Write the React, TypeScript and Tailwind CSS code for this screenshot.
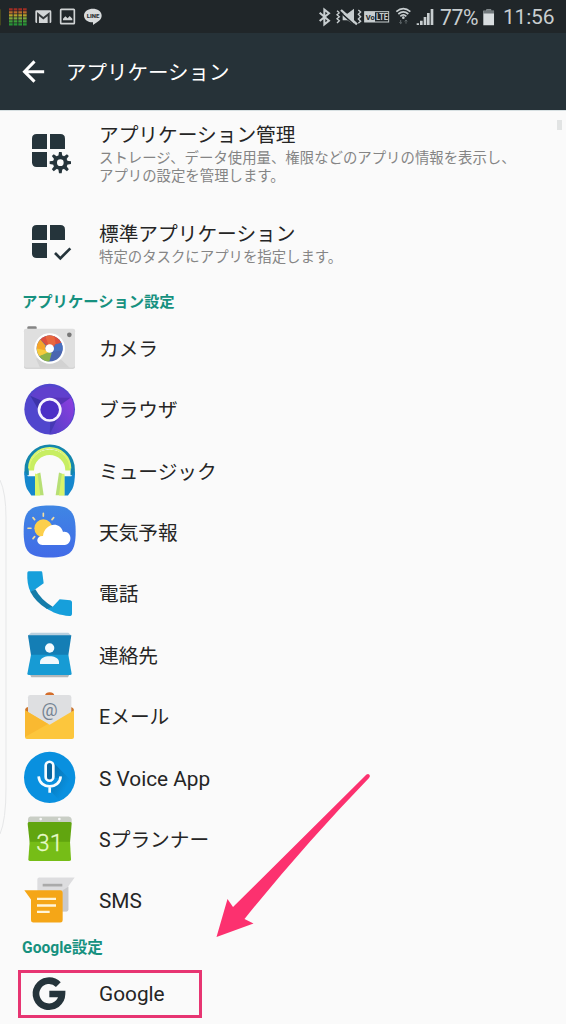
import React from "react";

type IconProps = { box: string; children: React.ReactNode };

function AppIcon({ box, children }: IconProps) {
  return (
    <svg viewBox={box} className="h-14 w-14 shrink-0">
      {children}
    </svg>
  );
}

const ink = "#25343b";

function ManageIcon() {
  const teeth = [0, 45, 90, 135, 180, 225, 270, 315];
  return (
    <AppIcon box="66 45 168 168">
      <g fill={ink}>
        <path d="M110 72H141V117H96V86Q96 72 110 72Z" />
        <path d="M150 72H181Q195 72 195 86V117H150Z" />
        <path d="M96 126H141V171H110Q96 171 96 157Z" />
        {teeth.map((a) => (
          <path key={a} d="M177 126H185L187 139H175Z" transform={`rotate(${a} 181 158)`} />
        ))}
      </g>
      <circle cx="181" cy="158" r="16" fill="none" stroke={ink} strokeWidth="12" />
    </AppIcon>
  );
}

function DefaultsIcon() {
  return (
    <AppIcon box="66 312 168 168">
      <g fill={ink}>
        <path d="M110 345H141V390H96V359Q96 345 110 345Z" />
        <path d="M150 345H181Q195 345 195 359V390H150Z" />
        <path d="M96 399H141V444H110Q96 444 96 430Z" />
      </g>
      <path d="M165 429L181 445L211 415" fill="none" stroke={ink} strokeWidth="8" />
    </AppIcon>
  );
}

function CameraIcon() {
  return (
    <AppIcon box="66 15.5 168 168">
      <path d="M82 40V35Q82 31 86 31H106Q110 31 110 35V40Z" fill="#858585" />
      <rect x="72" y="40" width="153" height="119" rx="6" fill="#c9c9c9" />
      <rect x="72" y="39" width="153" height="117" rx="6" fill="#dfdfdf" />
      <path d="M180 128L209 156H120L108 128Z" fill="#d2d2d2" />
      <circle cx="208" cy="57" r="7" fill="#777" />
      <circle cx="149" cy="98" r="46" fill="#fff" />
      <circle cx="149" cy="98" r="39" fill="#4a66b0" />
      <path d="M149 98L121 71A39 39 0 0 1 184 81Z" fill="#dd4f3e" />
      <path d="M149 98L136 61A39 39 0 0 1 163 61.500L167 84Z" fill="#e8683f" />
      <path d="M165 86L184 81A39 39 0 0 1 188 104L160 108Z" fill="#4a70be" />
      <path d="M121 71L136 88L137 108L111 106A39 39 0 0 1 121 71Z" fill="#f5a42a" />
      <path d="M110 98L139 104L150 112L118 121A39 39 0 0 1 110 98Z" fill="#f5cb3d" />
      <path d="M118 121L148 108L155 112L148 137A39 39 0 0 1 118 121Z" fill="#8cb34a" />
      <circle cx="149" cy="98" r="13" fill="#fff" />
    </AppIcon>
  );
}

function BrowserIcon() {
  return (
    <AppIcon box="66 199.4 168 168">
      <defs>
        <linearGradient id="violet" x1="0" y1="1" x2="1" y2="0">
          <stop offset="0" stopColor="#5041c6" />
          <stop offset="1" stopColor="#8f3de0" />
        </linearGradient>
      </defs>
      <circle cx="149" cy="281" r="76" fill="#5046cd" />
      <path d="M91 241A76 76 0 0 1 213 244L149 246L121 266Z" fill="#6040cd" />
      <path d="M149 246H213A76 76 0 0 1 149 357L178 296Z" fill="url(#violet)" />
      <path d="M149 246H213L182 268Z" fill="#5634b8" />
      <path d="M91 241L132 311L115 279L125 256Z" fill="#3d33a9" />
      <path d="M149 357L178 296L151 316Z" fill="#4638b4" />
      <circle cx="149" cy="283" r="32" fill="#4c2fc6" stroke="#f7f4ff" strokeWidth="8" />
    </AppIcon>
  );
}

function MusicIcon() {
  return (
    <AppIcon box="66 383.2 168 168">
      <path d="M80 480V463A69 69 0 0 1 218 463V480" fill="none" stroke="#1486ac" strokeWidth="13" />
      <path d="M94 466A55 55 0 0 1 204 466" fill="none" stroke="#c8ee62" strokeWidth="16" />
      <path d="M87 460A62 62 0 0 1 211 460" fill="none" stroke="#dcf66d" strokeWidth="6" />
      <path d="M73 467L84 483H105V541H94L81 521Q73 505 73 467Z" fill="#1587cd" />
      <path d="M225 467L214 483H193V541H204L217 521Q225 505 225 467Z" fill="#1587cd" />
      <path d="M105 478L121 472L131 540H105Z" fill="#b7df75" />
      <path d="M193 478L177 472L167 540H193Z" fill="#b7df75" />
      <path d="M105 475L113 478L121 541H105Z" fill="#d8f46a" />
      <path d="M193 475L185 478L177 541H193Z" fill="#d8f46a" />
    </AppIcon>
  );
}

function WeatherIcon() {
  return (
    <AppIcon box="66 27.2 168 168">
      <defs>
        <linearGradient id="sky" x1="0" y1="0" x2="0" y2="1">
          <stop offset="0" stopColor="#3f86e4" />
          <stop offset="1" stopColor="#426be7" />
        </linearGradient>
      </defs>
      <path d="M71 107C71 47 85 29 149 29S227 47 227 107S213 185 149 185S71 167 71 107Z" fill="url(#sky)" />
      <circle cx="130" cy="97" r="27" fill="#fccf4b" />
      <path d="M130 52V61M99 65L104 71M84 97H93M99 128L104 122M161 65L156 71" stroke="#f1dda0" strokeWidth="5" strokeLinecap="round" />
      <path d="M127 147C106 145 107 119 129 120C133 82 180 74 189 108C216 103 220 145 194 147Z" fill="#fff" />
    </AppIcon>
  );
}

function PhoneIcon() {
  return (
    <AppIcon box="66 211 168 168">
      <path d="M86 227H123Q127 227 127 231L131 263L106 281L92 290Q80 266 82 232Q82 227 86 227Z" fill="#169fdb" />
      <path d="M179 311L211 314Q216 315 216 320V354Q216 361 208 361C180 359 158 351 138 337L158 333Z" fill="#169fdb" />
      <path d="M106 281Q124 314 158 333L141 340Q107 319 91 288Z" fill="#157ca9" />
    </AppIcon>
  );
}

function ContactsIcon() {
  return (
    <AppIcon box="66 395 168 168">
      <path d="M93 412H205L213 420V430H85V420Z" fill="#b9d0df" />
      <path d="M86 530H212L204 546H94Z" fill="#b2b7ba" />
      <path d="M84 420H214L205 480H93Z" fill="#147eb5" />
      <path d="M93 478H205L215 535Q215 539 210 539H87Q82 539 82 535Z" fill="#179bd4" />
      <circle cx="149" cy="458" r="14" fill="#f4fbff" />
      <path d="M120 506V500C120 477 177 477 177 500V506Z" fill="#f1f8fc" />
    </AppIcon>
  );
}

function EmailIcon() {
  return (
    <AppIcon box="66 23.9 168 168">
      <path d="M75 92Q75 82 86 81H212Q222 83 222 93V120H75Z" fill="#cd762c" />
      <path d="M135 46Q137 37 149 37T163 46Z" fill="#d46e2b" />
      <path d="M84 52Q84 45 91 45H207Q214 45 214 52V109L149 143L84 109Z" fill="#dedfe1" />
      <path d="M75 91L149 134L222 91V171Q222 177 216 177H81Q75 177 75 171Z" fill="#fcc63d" />
      <path d="M75 91L144 132L75 171Z" fill="#f9b931" />
      <text x="149" y="108" fontSize="54" textAnchor="middle" fill="#768493" className="font-['Roboto']">@</text>
    </AppIcon>
  );
}

function VoiceIcon() {
  return (
    <AppIcon box="66 207.8 168 168">
      <defs>
        <linearGradient id="shade" x1="0" y1="0" x2="1" y2="1">
          <stop offset="0" stopColor="#076da9" />
          <stop offset="0.7" stopColor="#0990df" />
        </linearGradient>
      </defs>
      <circle cx="149" cy="290" r="77" fill="#0990df" />
      <path d="M160 245L216 302Q209 338 178 359L152 331L180 292L160 291Z" fill="url(#shade)" />
      <g fill="none" stroke="#f7fcff" strokeWidth="8">
        <rect x="137" y="243" width="23" height="57" rx="11.5" fill="#08659f" />
        <path d="M116 287C118 327 180 327 182 287M149 316V336" />
      </g>
    </AppIcon>
  );
}

function PlannerIcon() {
  return (
    <AppIcon box="66 391.7 168 168">
      <path d="M91 408H206Q213 408 215 416V430H84V416Q85 408 91 408Z" fill="#c9cec5" />
      <circle cx="122" cy="416" r="4" fill="#f7f7f7" />
      <circle cx="178" cy="416" r="4" fill="#f7f7f7" />
      <path d="M87 425H211Q215 425 215 430L210 486H89L83 430Q83 425 87 425Z" fill="#61a50f" />
      <path d="M89 484H210L213 537Q213 542 207 542H91Q85 542 85 537Z" fill="#76bd17" />
      <text x="149" y="512" fontSize="72" textAnchor="middle" fill="#e7fac9" stroke="#e7fac9" strokeWidth="1" className="font-['Roboto'] font-light">31</text>
    </AppIcon>
  );
}

function MessageIcon() {
  return (
    <AppIcon box="66 35.6 168 168">
      <path d="M112 58Q112 52 118 52H224L205 78V148Q205 154 199 154H112Z" fill="#dddddf" />
      <path d="M187 91L205 80V148Q205 154 199 154H187Z" fill="#c9c9cb" />
      <rect x="128" y="71" width="59" height="8" fill="#aaa" />
      <path d="M73 90H181Q188 90 188 97V180Q188 187 181 187H100Q93 187 93 180V118Z" fill="#f5a617" />
      <path d="M111 116H168M111 136H168M111 155H149" stroke="#fff5d9" strokeWidth="7" />
    </AppIcon>
  );
}

function GoogleIcon() {
  return (
    <AppIcon box="66 318 168 168">
      <path d="M175 374A39 39 0 1 0 186 402H148" fill="none" stroke={ink} strokeWidth="20" />
    </AppIcon>
  );
}

function NotificationIcons() {
  const rows = ["#a12e24", "#b86b2a", "#b7a12b", "#7fa83c", "#3d9d38", "#279336"];
  return (
    <svg viewBox="0 0 330 99" className="h-[33px] w-[110px] shrink-0">
      <rect y="28" width="2" height="48" fill="#59571c" />
      {rows.map((color, i) => (
        <path key={color} d={`M27 ${28 + i * 9}H80`} stroke={color} strokeWidth="7" strokeDasharray="11 3" />
      ))}
      <rect x="106" y="31" width="48" height="38" rx="4" fill="#d3d6d7" />
      <path d="M114 69V42L130 55L146 42V69" fill="none" stroke="#34383a" strokeWidth="6" />
      <rect x="182" y="28" width="41" height="43" rx="2" fill="none" stroke="#d0d3d4" strokeWidth="5" />
      <path d="M189 61V56L196 49L203 55L209 48L217 56V61Z" fill="#d0d3d4" />
      <path d="M252 47C252 19 305 19 305 47C305 60 290 67 279 75V67C263 67 252 58 252 47Z" fill="#d8dbdc" />
      <text x="279" y="53" fontSize="17" textAnchor="middle" textLength="38" lengthAdjust="spacingAndGlyphs" fill="#303436" className="font-['Roboto'] font-black">LINE</text>
    </svg>
  );
}

function SystemIcons() {
  return (
    <svg viewBox="99 0 363 99" className="h-[33px] w-[121px] shrink-0" fill="none" stroke="#c8ced0">
      <path d="M113 38L141 62L127 73V29L141 40L113 63" strokeWidth="6" />
      <path d="M165 32L172 38L165 44L172 50L165 56L172 62L165 69M229 30L236 36L229 43L236 50L229 57L236 64L229 70" strokeWidth="4" />
      <path d="M182 41H196L216 26V74L196 61H182Z" fill="#c8ced0" stroke="none" />
      <path d="M174 36L222 79" stroke="#202629" strokeWidth="5" />
      <path d="M177 30L225 73" strokeWidth="7" />
      <rect x="248" y="35" width="72" height="31" strokeWidth="3" />
      <rect x="248" y="35" width="31" height="31" fill="#c8ced0" stroke="none" />
      <text x="251" y="60" fontSize="24" textLength="27" lengthAdjust="spacingAndGlyphs" fill="#202629" stroke="none" className="font-['Roboto'] font-bold">Vo</text>
      <text x="282" y="60" fontSize="25" textLength="36" lengthAdjust="spacingAndGlyphs" fill="#c8ced0" stroke="none" className="font-['Roboto'] font-bold">LTE</text>
      <path d="M343 35Q364 17 385 35M349 42Q364 29 379 42M355 49Q364 40 373 49" strokeWidth="5" />
      <circle cx="364" cy="53" r="4" fill="#c8ced0" stroke="none" />
      <path d="M356 60V71M352 67L356 71L360 67M372 71V60M368 64L372 60L376 64" stroke="#60686b" strokeWidth="3" />
      <path d="M404 70H411V75H404ZM414 62H422V75H414ZM425 51H433V75H425ZM435 39H443V75H435ZM446 27H454V75H446Z" fill="#c8ced0" stroke="none" />
    </svg>
  );
}

const apps = [
  { label: "カメラ", icon: <CameraIcon /> },
  { label: "ブラウザ", icon: <BrowserIcon /> },
  { label: "ミュージック", icon: <MusicIcon /> },
  { label: "天気予報", icon: <WeatherIcon /> },
  { label: "電話", icon: <PhoneIcon /> },
  { label: "連絡先", icon: <ContactsIcon /> },
  { label: "Eメール", icon: <EmailIcon /> },
  { label: "S Voice App", icon: <VoiceIcon />, latin: true },
  { label: "Sプランナー", icon: <PlannerIcon /> },
  { label: "SMS", icon: <MessageIcon />, latin: true },
];

export default function App() {
  return (
    <div className="relative flex h-[1024px] w-[566px] flex-col overflow-hidden bg-[#fafafa] font-['Roboto','Noto_Sans_CJK_JP',sans-serif] text-[#252525]">
      <header className="shrink-0 bg-[#263238] text-white">
        <div className="flex h-[33px] items-center justify-between bg-[#202629] text-[#c8ced0]">
          <NotificationIcons />
          <div className="flex h-[33px] items-center pr-[12px]">
            <SystemIcons />
            <span className="ml-[4px] w-[39px] whitespace-nowrap pt-px text-[21.2px] leading-[33px] tracking-[-0.4px]">77%</span>
            <svg viewBox="600 20 40 60" className="ml-[3px] h-5 w-[13px]">
              <path d="M614 26H628V31H637V75H604V31H614Z" fill="#d8dddf" />
              <path d="M614 26H628V31H637V39H604V31H614Z" fill="#71797c" />
            </svg>
            <span className="ml-[8px] w-[51px] whitespace-nowrap pt-px text-[21px] leading-[33px] tracking-[-0.2px]">11:56</span>
          </div>
        </div>
        <div className="flex h-[77px] items-center pl-[22px]">
          <svg viewBox="66 180 68 69" className="h-[23px] w-[23px]" fill="none" stroke="#fff" strokeWidth="9">
            <path d="M132 215H73M103 184L73 215L103 245" />
          </svg>
          <h1 className="mt-[2px] ml-[21px] text-[20.5px] leading-[30px]">アプリケーション</h1>
        </div>
      </header>

      <main className="flex flex-1 flex-col border-t border-[#d7e0e2]">
        <section className="flex h-[98px] shrink-0 items-start pl-[22px] pt-[14px]">
          <ManageIcon />
          <div className="-mt-[4px] ml-[21px]">
            <h2 className="text-[19.7px] leading-[29px]">アプリケーション管理</h2>
            <p className="whitespace-nowrap text-[14.4px] leading-[18px] text-[#858585]">
              ストレージ、データ使用量、権限などのアプリの情報を表示し、<br />アプリの設定を管理します。
            </p>
          </div>
        </section>
        <section className="flex h-[81px] shrink-0 items-start pl-[22px] pt-[5px]">
          <DefaultsIcon />
          <div className="mt-[6px] ml-[21px]">
            <h2 className="text-[19.7px] leading-[29px]">標準アプリケーション</h2>
            <p className="text-[14.4px] leading-[18px] text-[#858585]">特定のタスクにアプリを指定します。</p>
          </div>
        </section>
        <h3 className="h-[28px] shrink-0 pl-[22px] text-[15.3px] leading-[24px] font-bold text-[#16917f]">アプリケーション設定</h3>
        <ul className="shrink-0">
          {apps.map(({ label, icon, latin }) => (
            <li key={label} className="flex h-[61.3px] items-center pl-[22px]">
              {icon}
              <span className={latin ? "mt-[2px] ml-[21px] text-[20.8px] leading-[28px]" : "mt-[3px] ml-[21px] text-[19.7px] leading-[28px]"}>{label}</span>
            </li>
          ))}
        </ul>
        <h3 className="mt-[5px] h-[34px] shrink-0 pl-[22px] text-[15.6px] leading-[25px] font-bold text-[#16917f]">Google設定</h3>
        <div className="ml-[18px] flex h-[48px] w-[184px] shrink-0 items-center border-[3px] border-[#e73572] pl-px">
          <GoogleIcon />
          <span className="mt-px ml-[21px] text-[20.8px] leading-[28px]">Google</span>
        </div>
      </main>

      <div className="absolute top-[120px] right-[4px] h-[10px] w-[5px] bg-[#e2e4e4]" />
      <svg viewBox="0 0 8 360" className="pointer-events-none absolute top-[478px] left-0 h-[360px] w-2" fill="none" stroke="#e6e7e8">
        <path d="M0 2Q6 15 6 40V310Q6 342 0 356" />
      </svg>
      <svg viewBox="200 760 190 190" className="pointer-events-none absolute top-[760px] left-[200px] h-[190px] w-[190px]">
        <path d="M366.500 774.500Q369 773 370 776L369 778Q305 844 244.500 919L253.500 923.500L216.500 937L227.500 899L233 907Z" fill="#fc316f" />
      </svg>
    </div>
  );
}
